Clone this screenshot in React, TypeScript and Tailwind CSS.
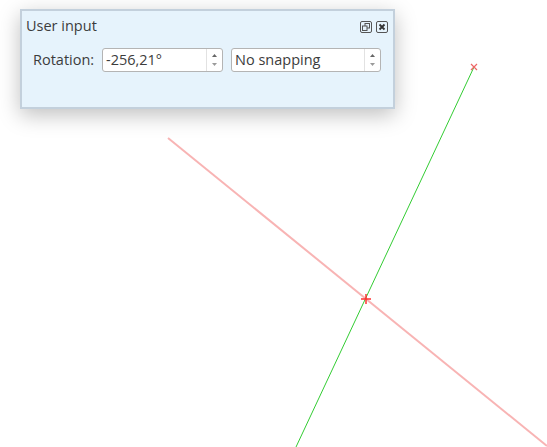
import React from 'react';

const SpinArrows: React.FC = () => (
  <div className="flex flex-col items-center justify-center w-[16px] border-l border-[#e2e2e2] h-full gap-[6px]">
    <svg width="5" height="3" viewBox="0 0 5 3"><path d="M0 3 L2.5 0 L5 3 Z" fill="#666" /></svg>
    <svg width="5" height="3" viewBox="0 0 5 3"><path d="M0 0 L2.5 3 L5 0 Z" fill="#9a9a9a" /></svg>
  </div>
);

const App: React.FC = () => {
  return (
    <div className="relative w-[547px] h-[447px] bg-white overflow-hidden" style={{ fontFamily: '"Open Sans", "Noto Sans", sans-serif' }}>
      {/* canvas with the two guide lines */}
      <svg className="absolute inset-0" width="547" height="447" viewBox="0 0 547 447">
        <line x1="168" y1="138" x2="547" y2="446" stroke="#f8b4b4" strokeWidth="2" />
        <line x1="474" y1="67" x2="296" y2="447" stroke="#33cc33" strokeWidth="1" />
        <path d="M471 64 L477 70 M477 64 L471 70" stroke="#ee6666" strokeWidth="1.2" />
        <path d="M361 299 L371 299 M366 294 L366 304" stroke="#ff3333" strokeWidth="1.5" />
      </svg>

      {/* user input dock */}
      <div className="absolute left-[20px] top-[9px] w-[375px] h-[100px] bg-[#e6f3fc] border-2 border-[#c3d0dc] shadow-[0_6px_20px_rgba(0,0,0,0.25)] text-[14.5px] text-[#3c3c3c]">
        <div className="flex items-center justify-between pl-[4px] pr-[5px] pt-[4px] h-[26px]">
          <span>User input</span>
          <div className="flex gap-[4px] mt-[2px]">
            <svg width="12" height="12" viewBox="0 0 12 12">
              <rect x="0.5" y="0.5" width="11" height="11" rx="1.5" fill="none" stroke="#555" />
              <rect x="5" y="2.5" width="4.5" height="4.5" fill="none" stroke="#555" />
              <rect x="2.5" y="5" width="4.5" height="4.5" fill="#e6f3fc" stroke="#555" />
            </svg>
            <svg width="12" height="12" viewBox="0 0 12 12">
              <rect x="0.5" y="0.5" width="11" height="11" rx="1.5" fill="none" stroke="#555" />
              <path d="M3.5 3.5 L8.5 8.5 M8.5 3.5 L3.5 8.5" stroke="#333" strokeWidth="1.8" />
            </svg>
          </div>
        </div>
        <div className="flex items-center mt-[11px] pl-[11px]">
          <span className="w-[69px]">Rotation:</span>
          <div className="flex items-center w-[121px] h-[24px] bg-white border border-[#b4b4b4] rounded-[3px]">
            <span className="flex-1 pl-[3px]">-256,21°</span>
            <SpinArrows />
          </div>
          <div className="flex items-center w-[150px] h-[24px] ml-[8px] bg-white border border-[#b4b4b4] rounded-[3px]">
            <span className="flex-1 pl-[3px]">No snapping</span>
            <SpinArrows />
          </div>
        </div>
      </div>
    </div>
  );
};

export default App;
